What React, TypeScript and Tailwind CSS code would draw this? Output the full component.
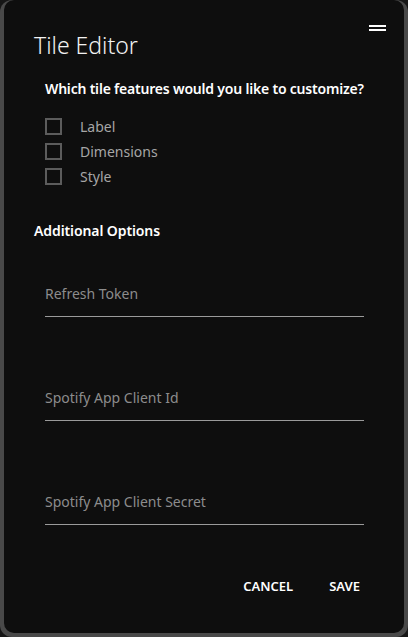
import { useState } from 'react'

const features = ['Label', 'Dimensions', 'Style']
const fields = ['Refresh Token', 'Spotify App Client Id', 'Spotify App Client Secret']

const App = () => {
  const [checked, setChecked] = useState<Record<string, boolean>>({})
  return (
    <div
      className="h-[637px] w-[408px] bg-[#161616]"
      style={{ fontFamily: '"Noto Sans", "Open Sans", sans-serif' }}
    >
      <div className="h-full rounded-[12px] bg-[#494949] px-1 pb-1">
        <div className="relative flex h-full flex-col rounded-[10px] bg-[#0e0e0e] pt-[30px]">
          <button className="absolute right-[18px] top-[25px] flex w-[17px] flex-col gap-[2px]">
            <span className="h-[2px] w-full bg-white" />
            <span className="h-[2px] w-full bg-white" />
          </button>
          <h1 className="pl-[30px] text-[23px] font-light leading-[30px] text-[#f2f2f2]">
            Tile Editor
          </h1>
          <p className="mt-[19px] pl-[41px] text-[14px] font-semibold leading-[20px] tracking-[-0.2px] text-white">
            Which tile features would you like to customize?
          </p>
          <div className="mt-[19px] flex flex-col gap-[8px] pl-[41px]">
            {features.map((f) => (
              <label key={f} className="flex h-[17px] items-center gap-[18px]">
                <span
                  onClick={() => setChecked({ ...checked, [f]: !checked[f] })}
                  className="size-[17px] border-2 border-[#5c5c5c]"
                />
                <span className="text-[14px] text-[#a6a6a6]">{f}</span>
              </label>
            ))}
          </div>
          <h2 className="mt-[36px] pl-[30px] text-[14px] font-semibold leading-[20px] tracking-[-0.1px] text-white">
            Additional Options
          </h2>
          <div className="mt-[32px] flex flex-col gap-[60px] pl-[41px] pr-[40px]">
            {fields.map((f) => (
              <input
                key={f}
                placeholder={f}
                className="h-[44px] w-full border-b border-[#9a9a9a] bg-transparent pb-[3px] text-[14px] text-white outline-none placeholder:text-[#8c8c8c]"
              />
            ))}
          </div>
          <div className="mt-[52px] flex justify-end gap-[36px] pr-[44px]">
            <button className="text-[13px] font-semibold text-white">CANCEL</button>
            <button className="text-[13px] font-semibold text-white">SAVE</button>
          </div>
        </div>
      </div>
    </div>
  )
}

export default App
